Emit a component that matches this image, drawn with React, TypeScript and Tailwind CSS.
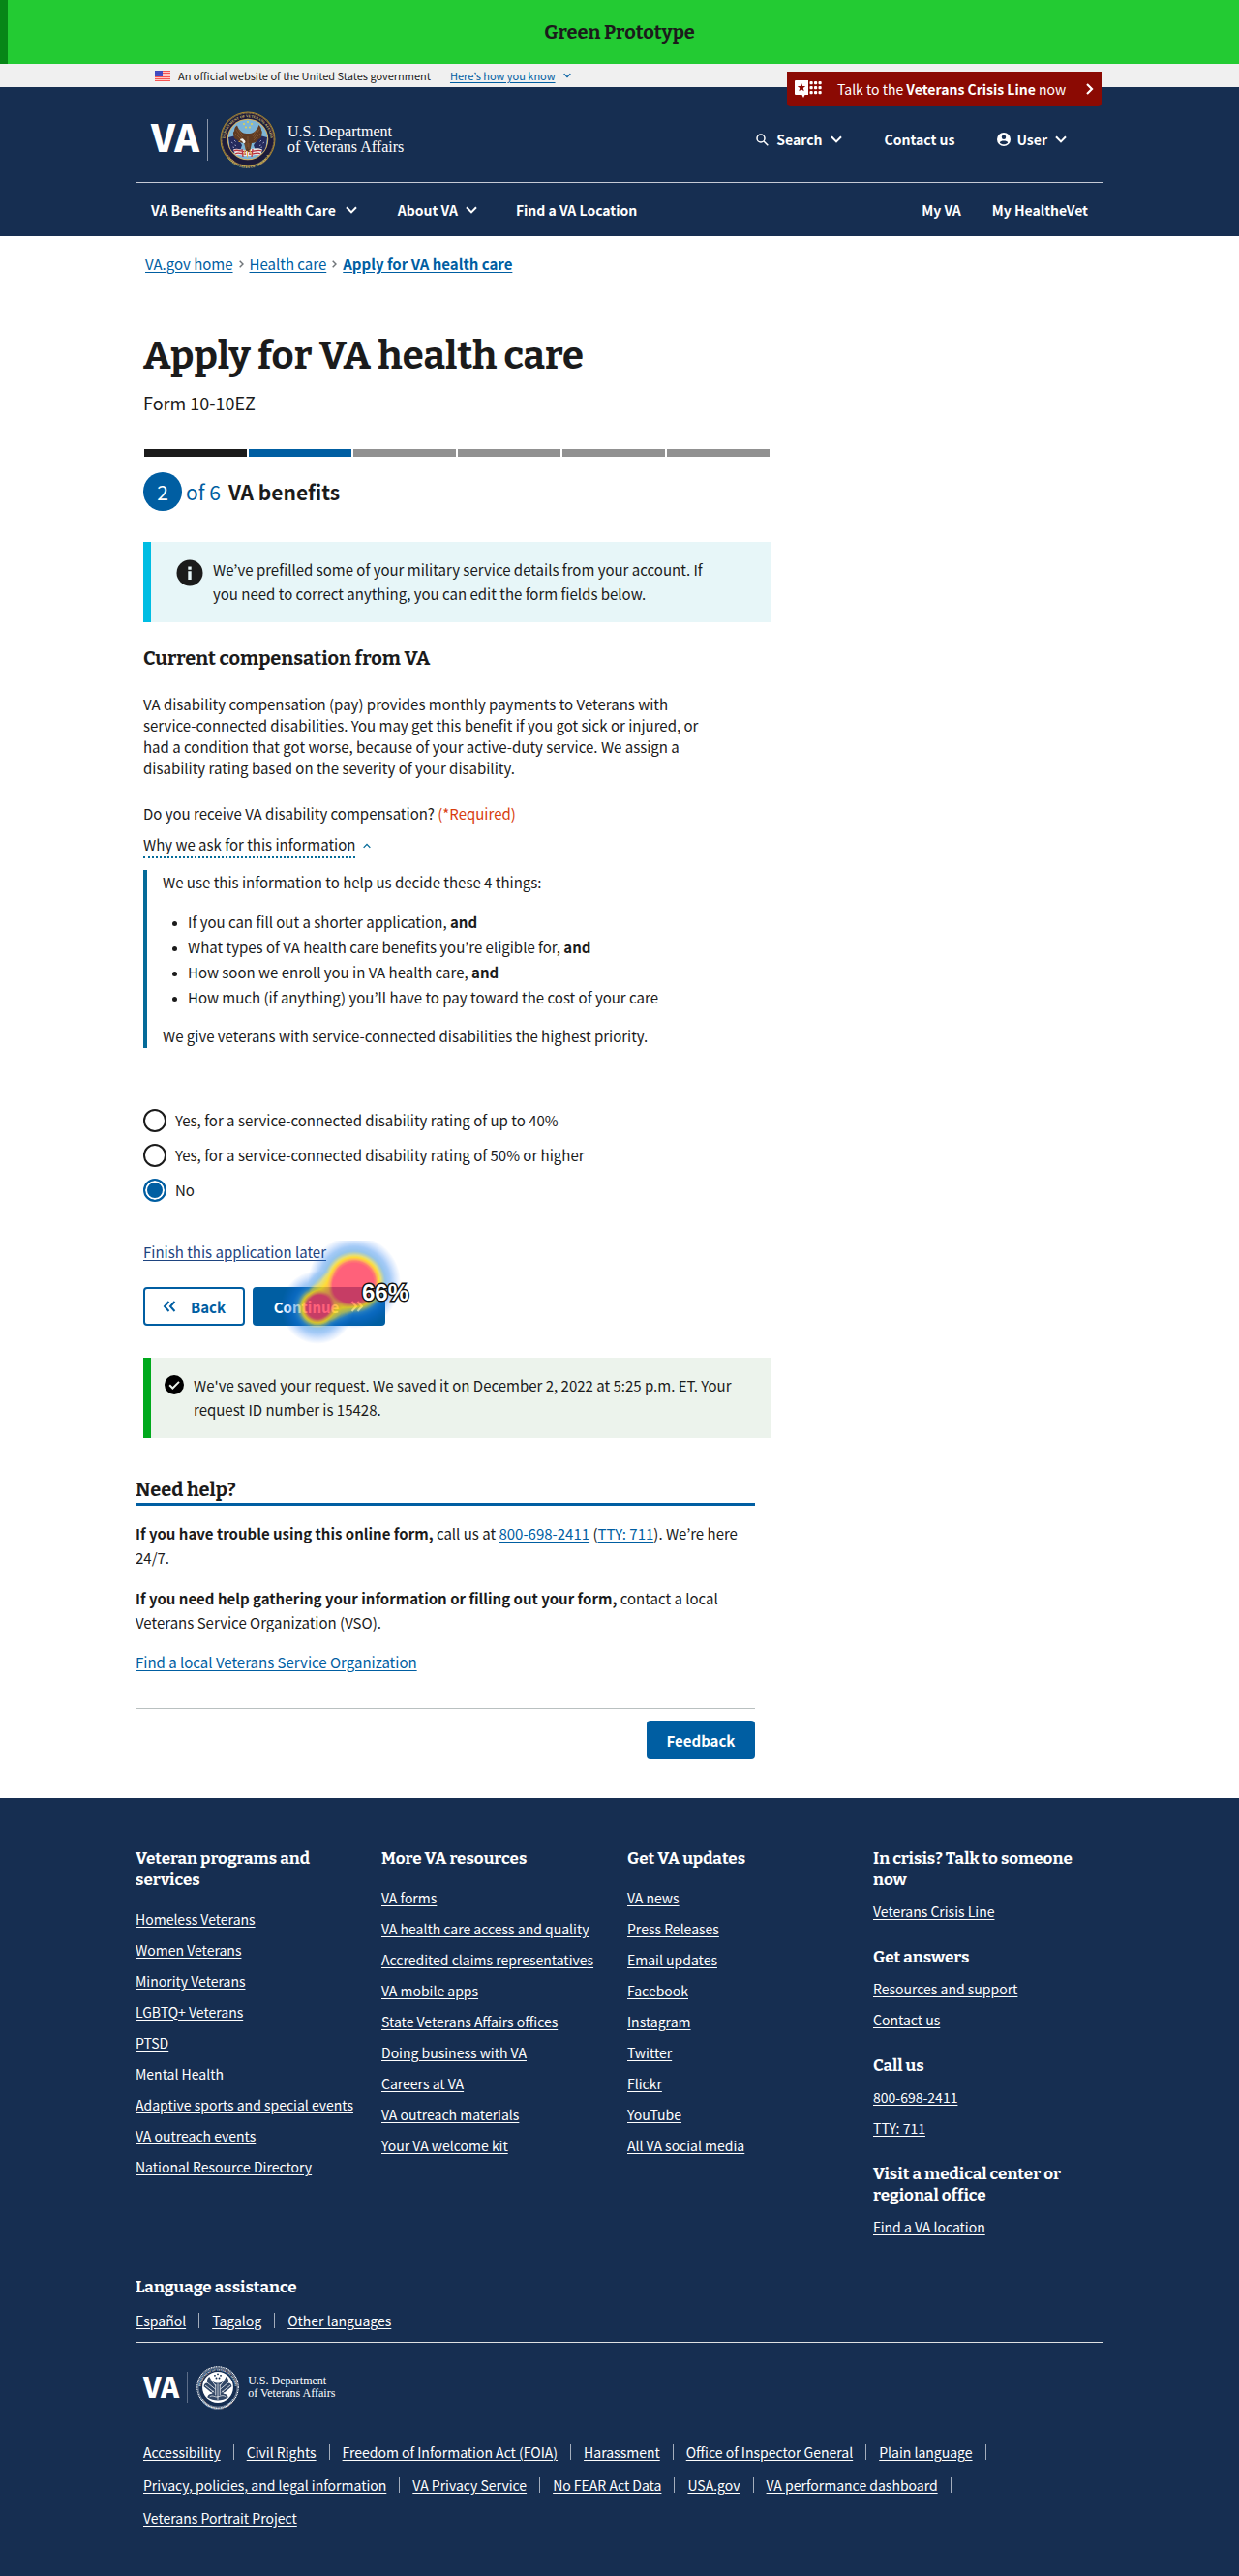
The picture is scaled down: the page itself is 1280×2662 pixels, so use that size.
import { useState, type ReactNode } from "react";

const SANS = "font-['Source_Sans_Pro','Noto_Sans_CJK_KR',sans-serif]";
const SLAB = "font-['Bitter','DejaVu_Serif_Condensed',serif] font-bold";
const SERIF = "font-['Liberation_Serif',serif]";

const benefitLinks = [
  "Homeless Veterans",
  "Women Veterans",
  "Minority Veterans",
  "LGBTQ+ Veterans",
  "PTSD",
  "Mental Health",
  "Adaptive sports and special events",
  "VA outreach events",
  "National Resource Directory",
];
const resourceLinks = [
  "VA forms",
  "VA health care access and quality",
  "Accredited claims representatives",
  "VA mobile apps",
  "State Veterans Affairs offices",
  "Doing business with VA",
  "Careers at VA",
  "VA outreach materials",
  "Your VA welcome kit",
];
const updateLinks = [
  "VA news",
  "Press Releases",
  "Email updates",
  "Facebook",
  "Instagram",
  "Twitter",
  "Flickr",
  "YouTube",
  "All VA social media",
];
const contactGroups = [
  { title: "In crisis? Talk to someone now", links: ["Veterans Crisis Line"] },
  { title: "Get answers", links: ["Resources and support", "Contact us"] },
  { title: "Call us", links: ["800-698-2411", "TTY: 711"] },
  { title: "Visit a medical center or regional office", links: ["Find a VA location"] },
];
const languages = ["Español", "Tagalog", "Other languages"];
const legalLinks = [
  "Accessibility",
  "Civil Rights",
  "Freedom of Information Act (FOIA)",
  "Harassment",
  "Office of Inspector General",
  "Plain language",
  "Privacy, policies, and legal information",
  "VA Privacy Service",
  "No FEAR Act Data",
  "USA.gov",
  "VA performance dashboard",
  "Veterans Portrait Project",
];
const ratings = [
  "Yes, for a service-connected disability rating of up to 40%",
  "Yes, for a service-connected disability rating of 50% or higher",
  "No",
];

function Chevron({ className = "h-2 w-3" }: { className?: string }) {
  return (
    <svg viewBox="0 0 12 8" className={`shrink-0 ${className}`} fill="none" stroke="currentColor" strokeWidth="2" aria-hidden="true">
      <path d="M1 1.2 6 6.4 11 1.2" />
    </svg>
  );
}

function DoubleAngle({ flip = false }: { flip?: boolean }) {
  return (
    <svg viewBox="0 0 14 12" className="h-3 w-3.5 shrink-0" fill="none" stroke="currentColor" strokeWidth="2" aria-hidden="true">
      <path d={flip ? "M6.5 1 2 6l4.5 5M12.5 1 8 6l4.5 5" : "M1.5 1 6 6l-4.5 5M7.5 1 12 6l-4.5 5"} />
    </svg>
  );
}

function Flag() {
  return (
    <svg viewBox="0 0 16 11" className="h-[11px] w-4 shrink-0" aria-hidden="true">
      <rect width="16" height="11" fill="#fff" />
      {[0, 2, 4, 6, 8, 10].map((y) => (
        <rect key={y} y={y} width="16" height="1" fill="#ee2b32" />
      ))}
      <rect width="16" height="11" fill="#ff8a7a" opacity="0.45" />
      <rect width="8" height="6" fill="#2a35b8" />
      {[1, 3, 5].map((y) =>
        [1, 3, 5, 7].map((x) => <circle key={`${x}-${y}`} cx={x} cy={y} r="0.4" fill="#fff" />)
      )}
    </svg>
  );
}

function SealLettering({ fill }: { fill: string }) {
  return (
    <g fill={fill} fontSize="7.5" fontWeight="700" fontFamily="Liberation Serif, serif" textAnchor="middle">
      <text><textPath href="#seal-top" startOffset="50%">DEPARTMENT OF VETERANS AFFAIRS</textPath></text>
      <text><textPath href="#seal-bottom" startOffset="50%">UNITED STATES OF AMERICA</textPath></text>
    </g>
  );
}

function ColorSeal() {
  return (
    <svg viewBox="0 0 116 116" className="size-[58px] shrink-0 overflow-visible" role="img" aria-label="Department of Veterans Affairs seal">
      <defs>
        <path id="seal-top" d="M13 73 A47 47 0 1 1 103 73" />
        <path id="seal-bottom" d="M7 67 A51 51 0 0 0 109 67" />
        <clipPath id="seal-inner"><circle cx="58" cy="58" r="41" /></clipPath>
      </defs>
      <circle cx="58" cy="58" r="57" fill="#a8862f" />
      <circle cx="58" cy="58" r="55" fill="#1c1b3a" />
      <circle cx="58" cy="58" r="54" fill="none" stroke="#d9b65a" strokeWidth="1.5" strokeDasharray="2 1" />
      <circle cx="58" cy="58" r="42.5" fill="#d2b064" />
      <circle cx="58" cy="58" r="40.5" fill="#7db4d6" />
      <SealLettering fill="#dcc06e" />
      <g clipPath="url(#seal-inner)">
        <path d="M18 54 L33 50 L46 70 L40 88 L22 84 Z" fill="#252a5c" />
        <path d="M98 54 L83 50 L70 70 L76 88 L94 84 Z" fill="#252a5c" />
        <path d="M24 64l3 2M30 60l3 3M31 70l3 1M92 64l-3 2M86 60l-3 3M85 70l-3 1M27 74l3 1M88 74l-3 1" stroke="#c9cde8" strokeWidth="1.5" />
        <path d="M28 79 C38 74 44 82 56 80 C66 78 78 74 88 79 L84 91 C74 86 66 94 57 92 C48 94 40 86 33 91 Z" fill="#eee7e4" />
        <path d="M29 82 C39 77 45 85 54 83M32 88 C40 83 46 90 54 88M87 82 C77 77 71 85 60 83M84 88 C76 83 70 90 60 88M48 94 L46 78M66 94 L68 78" stroke="#b8323f" strokeWidth="2.6" fill="none" />
      </g>
      <path d="M55 46 C47 46 40 40 36 29 C32 31 30 35 30 41 C28 42 27 46 29 50 C28 54 31 58 36 59 C39 64 45 66 50 65 L54 81 L58 85 L63 80 L66 66 C72 66 77 63 80 58 C85 57 87 53 86 49 C88 46 88 41 86 39 C86 34 84 31 81 28 C77 39 70 46 62 46 Z" fill="#5f3a22" />
      <path d="M34 38 L46 56M32 46 L46 60M82 37 L70 56M84 46 L70 60M54 66v12M60 66v12M58 52v22M38 36l10 16M78 35L68 52" stroke="#8f6038" strokeWidth="1.3" fill="none" />
      <path d="M50 59 C48 55 42 56 42 61 C45 60 46 62 49 66 C53 67 55 62 50 59 Z" fill="#f4f1ea" />
      <path d="M41 61l-3 3 5-.5z" fill="#e2ae3c" />
      <path d="M52 80l-2 10M57 82v13M62 80l4 10" stroke="#e0b44c" strokeWidth="2" />
      <g fill="#e5d24c">
        <circle cx="58" cy="22" r="2" /><circle cx="50" cy="26" r="2" /><circle cx="66" cy="26" r="2" />
        <circle cx="54" cy="33" r="2" /><circle cx="62" cy="33" r="2" />
      </g>
    </svg>
  );
}

function MonoSeal() {
  return (
    <svg viewBox="0 0 116 116" className="size-11 shrink-0 overflow-visible" role="img" aria-label="Department of Veterans Affairs seal">
      <circle cx="58" cy="58" r="56" fill="none" stroke="#fff" strokeWidth="3" strokeDasharray="3 1.5" />
      <circle cx="58" cy="58" r="53" fill="none" stroke="#fff" strokeWidth="1.5" opacity="0.7" />
      <SealLettering fill="#fff" />
      <circle cx="58" cy="58" r="42" fill="#fff" />
      <path d="M55 46 C47 46 40 40 35 29 C30 33 28 39 29 46 C24 46 20 50 20 56 L44 76 C36 76 30 80 30 86 C46 96 70 96 86 86 C86 80 80 76 72 76 L96 56 C96 50 92 46 87 46 C88 39 86 33 81 29 C76 40 69 46 61 46 Z" fill="#162e51" opacity="0.88" />
      <path d="M28 44 L52 64M24 53 L48 72M88 44 L64 64M92 53 L68 72M52 50v30M64 50v30M58 48v44M36 84c8-6 14 2 22 0s14-6 22 0M40 38l12 16M76 38L64 54M46 68l-8 8M70 68l8 8" stroke="#fff" strokeWidth="2" fill="none" />
      <g fill="#162e51">
        <circle cx="58" cy="22" r="2.5" /><circle cx="50" cy="26" r="2.5" /><circle cx="66" cy="26" r="2.5" />
        <circle cx="54" cy="33" r="2.5" /><circle cx="62" cy="33" r="2.5" />
      </g>
    </svg>
  );
}

/* Click-density field: opacity is mapped to colour through the filter tables. */
function HeatOverlay() {
  return (
    <div className="pointer-events-none absolute -top-12 left-4">
      <svg viewBox="0 0 140 120" className="h-[120px] w-[140px]" aria-hidden="true">
        <defs>
          <radialGradient id="heat-large">
            <stop offset="0" stopOpacity="1" />
            <stop offset="0.46" stopOpacity="0.66" />
            <stop offset="0.58" stopOpacity="0.4" />
            <stop offset="0.72" stopOpacity="0.24" />
            <stop offset="1" stopOpacity="0" />
          </radialGradient>
          <radialGradient id="heat-small">
            <stop offset="0" stopOpacity="1" />
            <stop offset="0.33" stopOpacity="0.66" />
            <stop offset="0.48" stopOpacity="0.38" />
            <stop offset="0.66" stopOpacity="0.22" />
            <stop offset="1" stopOpacity="0" />
          </radialGradient>
          <filter id="heat-ramp" x="0" y="0" width="1" height="1" colorInterpolationFilters="sRGB">
            <feColorMatrix values="0 0 0 1 0  0 0 0 1 0  0 0 0 1 0  0 0 0 1 0" />
            <feComponentTransfer>
              <feFuncR type="table" tableValues="0.1 0.1 0.1 0.25 0.85 1 1 1 1 1 1" />
              <feFuncG type="table" tableValues="0.45 0.45 0.48 0.58 0.82 0.84 0.6 0.2 0.2 0.2 0.2" />
              <feFuncB type="table" tableValues="0.95 0.95 0.92 0.85 0.3 0.08 0.2 0.33 0.33 0.33 0.33" />
              <feFuncA type="table" tableValues="0 0.18 0.4 0.55 0.72 0.85 0.8 0.78 0.78 0.78 0.78" />
            </feComponentTransfer>
          </filter>
        </defs>
        <g filter="url(#heat-ramp)">
          <rect width="140" height="120" fill="none" />
          <circle cx="89" cy="43" r="48" fill="url(#heat-large)" />
          <circle cx="51" cy="69" r="38" fill="url(#heat-small)" />
        </g>
      </svg>
      <span className="absolute top-10 left-[97px] font-['Liberation_Sans',sans-serif] text-[24px] leading-7 font-bold text-white [-webkit-text-stroke:3px_#111] [paint-order:stroke_fill]">66%</span>
    </div>
  );
}

function Link({ children, className = "" }: { children: ReactNode; className?: string }) {
  return <a href="#" className={`underline underline-offset-2 ${className}`}>{children}</a>;
}

function FooterColumn({ title, links }: { title: string; links: string[] }) {
  return (
    <section className="pr-6">
      <h2 className={`${SLAB} text-[17px] leading-[22px]`}>{title}</h2>
      <ul className="mt-[17px] flex flex-col gap-2 whitespace-nowrap">
        {links.map((l) => <li key={l}><Link>{l}</Link></li>)}
      </ul>
    </section>
  );
}

function Divider() {
  return <span className="h-4 w-px bg-[#a3adbc]" aria-hidden="true" />;
}

export default function App() {
  const [rating, setRating] = useState(2);
  return (
    <div className={`${SANS} bg-white text-[15px] leading-[25px] text-[#1b1b1b]`}>
      <div className="flex h-[66px] items-center justify-center border-l-8 border-[#078617] bg-[#23cb33] pr-2">
        <p className={`${SLAB} text-[20px] leading-7`}>Green Prototype</p>
      </div>

      <div className="bg-[#f0f0f0]">
        <div className="mx-auto flex h-6 max-w-[1000px] items-center px-5 text-[11px] leading-4">
          <Flag />
          <span className="ml-2">An official website of the United States government</span>
          <button type="button" className="ml-5 flex items-center gap-2 text-[#005ea2]">
            <span className="underline underline-offset-2">Here’s how you know</span>
            <Chevron className="h-[6px] w-2" />
          </button>
        </div>
      </div>

      <header className="bg-[#162e51] text-[14px] leading-6 font-bold text-white">
        <div className="relative mx-auto max-w-[1000px]">
          <a href="#" className="absolute -top-4 right-0.5 flex h-9 w-[325px] items-center rounded-b-[4px] bg-[#8b0a03] pr-2 pl-2 font-normal">
            <svg viewBox="0 0 28 18" className="h-[18px] w-7 shrink-0" fill="#fff" aria-hidden="true">
              <path d="M1 0h13v15h-3.500l-1.500 3-1.500-3H1a1 1 0 0 1-1-1V1a1 1 0 0 1 1-1z" />
              <path d="m7 3 1.200 3h3l-2.400 2 .9 3.200L7 9.400l-2.700 1.800.9-3.200-2.400-2h3z" fill="#8b0a03" />
              {[2, 7, 12].map((y) => [17, 21.5, 26].map((x) => <rect key={`${x}${y}`} x={x - 1.5} y={y - 1} width="3.2" height="3.2" rx="1" />))}
            </svg>
            <span className="ml-4">Talk to the <b>Veterans Crisis Line</b> now</span>
            <svg viewBox="0 0 8 12" className="ml-auto h-3 w-2" fill="none" stroke="#fff" strokeWidth="2.2" aria-hidden="true"><path d="m1 1 5 5-5 5" /></svg>
          </a>

          <div className="flex items-center border-b border-[#c5cad5] px-4 pt-[25px] pb-[15px]">
            <a href="#" className="flex items-center">
              <span className="pb-2 text-[39px] leading-[43px] font-black">VA</span>
              <span className="ml-2 h-[43px] w-px bg-[#8c98ab]" />
              <span className="ml-3"><ColorSeal /></span>
              <span className={`${SERIF} ml-3 text-[16px] leading-4 font-normal`}>U.S. Department<br />of Veterans Affairs</span>
            </a>
            <div className="ml-auto flex items-center gap-11 pr-[22px]">
              <button type="button" className="flex items-center gap-2">
                <svg viewBox="0 0 13 13" className="size-[13px]" fill="none" stroke="#fff" strokeWidth="1.5" aria-hidden="true"><circle cx="5" cy="5" r="4" /><path d="m8 8 4.300 4.300" /></svg>
                Search
                <Chevron />
              </button>
              <a href="#">Contact us</a>
              <button type="button" className="flex items-center gap-2">
                <svg viewBox="0 0 14 14" className="-mr-0.5 size-3.5" aria-hidden="true"><circle cx="7" cy="7" r="7" fill="#fff" /><circle cx="7" cy="4.8" r="2.2" fill="#162e51" /><path d="M2.800 10.400C3.500 7.800 10.500 7.800 11.200 10.400 9.500 12.800 4.500 12.800 2.800 10.400z" fill="#162e51" /></svg>
                User
                <Chevron />
              </button>
            </div>
          </div>

          <nav className="flex h-[55px] items-center px-4">
            <button type="button" className="flex items-center gap-2.5">VA Benefits and Health Care <Chevron /></button>
            <button type="button" className="ml-[42px] flex items-center gap-2">About VA <Chevron /></button>
            <a href="#" className="ml-10">Find a VA Location</a>
            <a href="#" className="mr-8 ml-auto">My VA</a>
            <a href="#">My HealtheVet</a>
          </nav>
        </div>
      </header>

      <main className="mx-auto max-w-[1000px] pb-10">
        <div className="px-2">
          <nav aria-label="Breadcrumb" className="flex items-center gap-1.5 pt-[17px] pl-0.5 leading-6 text-[#005ea2]">
            <Link>VA.gov home</Link>
            <svg viewBox="0 0 5 8" className="h-2 w-[5px]" fill="none" stroke="#71767a" strokeWidth="1.5" aria-hidden="true"><path d="m.7.700 3.300 3.300L.7 7.300" /></svg>
            <Link>Health care</Link>
            <svg viewBox="0 0 5 8" className="h-2 w-[5px]" fill="none" stroke="#71767a" strokeWidth="1.5" aria-hidden="true"><path d="m.7.700 3.300 3.300L.7 7.300" /></svg>
            <Link className="font-bold">Apply for VA health care</Link>
          </nav>

          <div className="max-w-[648px]">
            <h1 className={`${SLAB} mt-[59px] text-[40px] leading-[48px]`}>Apply for VA health care</h1>
            <p className="mt-2.5 text-[18px] leading-7">Form 10-10EZ</p>

            <div className="mt-[34px] flex h-2 gap-0.5 px-px" role="progressbar" aria-valuenow={2} aria-valuemax={6} aria-label="Form progress">
              <span className="flex-1 bg-[#1b1b1b]" />
              <span className="flex-1 bg-[#005ea2]" />
              <span className="flex-1 bg-[#919191]" />
              <span className="flex-1 bg-[#919191]" />
              <span className="flex-1 bg-[#919191]" />
              <span className="flex-1 bg-[#919191]" />
            </div>
            <div className="mt-4 flex items-center text-[21px] leading-10">
              <span className="flex size-10 items-center justify-center rounded-full bg-[#005ea2] text-white">2</span>
              <span className="ml-1 text-[#005ea2]">of 6</span>
              <h2 className="ml-2 font-bold">VA benefits</h2>
            </div>

            <div className="mt-8 flex border-l-8 border-[#00bde3] bg-[#e7f6f8] pt-4 pr-12 pb-[17px] pl-[26px]">
              <svg viewBox="0 0 28 28" className="mt-0.5 size-7 shrink-0" aria-hidden="true"><circle cx="14" cy="14" r="13.5" fill="#1b1b1b" /><path d="M12.300 7.500h3.400v3.200h-3.400zM12.300 12.300h3.400V21h-3.400z" fill="#e7f6f8" /></svg>
              <p className="ml-2.5">We’ve prefilled some of your military service details from your account. If you need to correct anything, you can edit the form fields below.</p>
            </div>

            <h2 className={`${SLAB} mt-[23px] text-[20px] leading-7`}>Current compensation from VA</h2>
            <p className="mt-[23px] pr-14 leading-[22px]">VA disability compensation (pay) provides monthly payments to Veterans with service-connected disabilities. You may get this benefit if you got sick or injured, or had a condition that got worse, because of your active-duty service. We assign a disability rating based on the severity of your disability.</p>

            <p id="question" className="mt-6 leading-6">Do you receive VA disability compensation? <span className="text-[#d83d0e]">(*Required)</span></p>
            <button type="button" className="mt-2 flex items-center gap-2 text-left leading-6" aria-expanded="true">
              <span className="border-b-2 border-dotted border-[#046b99]">Why we ask for this information</span>
              <Chevron className="h-[6px] w-2 rotate-180 text-[#046b99]" />
            </button>
            <div className="mt-3 border-l-4 border-[#046b99] pl-4">
              <p>We use this information to help us decide these 4 things:</p>
              <ul className="mt-4 list-disc pl-[26px] leading-[26px] marker:text-[12px]">
                <li>If you can fill out a shorter application, <b>and</b></li>
                <li>What types of VA health care benefits you’re eligible for, <b>and</b></li>
                <li>How soon we enroll you in VA health care, <b>and</b></li>
                <li>How much (if anything) you’ll have to pay toward the cost of your care</li>
              </ul>
              <p className="mt-3.5">We give veterans with service-connected disabilities the highest priority.</p>
            </div>

            <div role="radiogroup" aria-labelledby="question" className="mt-[63px] flex flex-col items-start gap-3 leading-6">
              {ratings.map((r, i) => (
                <label key={r} className="flex items-center gap-[9px]">
                  <input
                    type="radio"
                    name="rating"
                    checked={rating === i}
                    onChange={() => setRating(i)}
                    className="size-6 appearance-none rounded-full border-2 border-[#1b1b1b] bg-white checked:border-[#005ea2] checked:bg-[#005ea2] checked:inset-ring-2 checked:inset-ring-white"
                  />
                  {r}
                </label>
              ))}
            </div>

            <p className="mt-10 leading-6 text-[#1e4480]"><Link>Finish this application later</Link></p>
            <div className="mt-6 flex gap-2 font-bold">
              <button type="button" className="flex h-10 w-[105px] items-center justify-center gap-[15px] rounded-[4px] border-2 border-[#005ea2] text-[#005ea2]"><DoubleAngle flip /> Back</button>
              <div className="relative">
                <button type="button" className="flex h-10 w-[137px] items-center justify-center gap-3 rounded-[4px] bg-[#005ea2] text-white">Continue <DoubleAngle /></button>
                <HeatOverlay />
              </div>
            </div>

            <div className="mt-[33px] flex border-l-8 border-[#00a91c] bg-[#ecf3ec] pt-4 pr-8 pb-[17px] pl-3.5">
              <svg viewBox="0 0 20 20" className="mt-0.5 size-5 shrink-0" aria-hidden="true"><circle cx="10" cy="10" r="10" fill="#000" /><path d="m5.200 10.300 3.200 3.200 6.600-6.600" fill="none" stroke="#ecf3ec" strokeWidth="2" /></svg>
              <p className="ml-2.5">We've saved your request. We saved it on December 2, 2022 at 5:25 p.m. ET. Your request ID number is 15428.</p>
            </div>
          </div>
        </div>

        <section className="max-w-[640px]">
          <h2 className={`${SLAB} mt-[39px] border-b-[3px] border-[#005ea2] text-[20px] leading-7`}>Need help?</h2>
          <p className="mt-4"><b>If you have trouble using this online form,</b> call us at <Link className="text-[#005ea2]">800-698-2411</Link> (<Link className="text-[#005ea2]">TTY: 711</Link>). We’re here 24/7.</p>
          <p className="mt-[17px]"><b>If you need help gathering your information or filling out your form,</b> contact a local Veterans Service Organization (VSO).</p>
          <p className="mt-4"><Link className="text-[#005ea2]">Find a local Veterans Service Organization</Link></p>
          <div className="mt-[35px] flex justify-end border-t border-[#b9c0c0] pt-3">
            <button type="button" className="h-10 w-28 rounded-[4px] bg-[#005ea2] font-bold text-white">Feedback</button>
          </div>
        </section>
      </main>

      <footer className="bg-[#162e51] text-[14px] leading-6 text-white">
        <div className="mx-auto max-w-[1000px] pt-[52px] pb-12">
          <div className="grid grid-cols-[254px_254px_254px_1fr]">
            <FooterColumn title="Veteran programs and services" links={benefitLinks} />
            <FooterColumn title="More VA resources" links={resourceLinks} />
            <FooterColumn title="Get VA updates" links={updateLinks} />
            <div className="flex flex-col gap-[25px]">
              {contactGroups.map((g) => (
                <section key={g.title}>
                  <h2 className={`${SLAB} text-[17px] leading-[22px]`}>{g.title}</h2>
                  <ul className="mt-[9px] flex flex-col gap-2">
                    {g.links.map((l) => <li key={l}><Link>{l}</Link></li>)}
                  </ul>
                </section>
              ))}
            </div>
          </div>

          <section className="mt-[23px] border-y border-[#dfe1e2] pt-4 pb-2.5">
            <h2 className={`${SLAB} text-[17px] leading-[22px]`}>Language assistance</h2>
            <div className="mt-[11px] flex items-center gap-[13px]">
              {languages.map((l, i) => (
                <span key={l} className="flex items-center gap-[13px]">
                  {i > 0 && <Divider />}
                  <Link>{l}</Link>
                </span>
              ))}
            </div>
          </section>

          <div className="px-2">
            <a href="#" className="mt-6 flex items-center">
              <span className="pb-1 text-[29px] leading-8 font-black">VA</span>
              <span className="ml-2 h-8 w-px bg-[#5c6d88]" />
              <span className="ml-[9px]"><MonoSeal /></span>
              <span className={`${SERIF} ml-[9px] text-[12px] leading-[13px]`}>U.S. Department<br />of Veterans Affairs</span>
            </a>
            <div className="mt-[33px] flex flex-wrap gap-x-[13px] gap-y-2.5 pr-2">
              {legalLinks.map((l, i) => (
                <span key={l} className="flex items-center gap-[13px]">
                  <Link>{l}</Link>
                  {i < legalLinks.length - 1 && <Divider />}
                </span>
              ))}
            </div>
          </div>
        </div>
      </footer>
    </div>
  );
}
